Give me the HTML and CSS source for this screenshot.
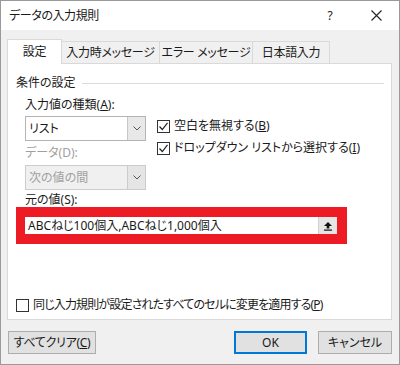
FILE: index.html
```html
<!DOCTYPE html>
<html lang="ja">
<head>
<meta charset="utf-8">
<link rel="stylesheet" href="styles.css">
</head>
<body>
<div class="window">
  <div class="titlebar">
    <span class="title">データの入力規則</span>
    <span class="help">?</span>
    <span class="close"><svg width="11" height="11" viewBox="0 0 11 11"><path d="M0.5 0.5 L10.5 10.5 M10.5 0.5 L0.5 10.5" stroke="#222" stroke-width="1.1" fill="none"/></svg></span>
  </div>
  <div class="content">
    <div class="tabs">
      <div class="tab active">設定</div>
      <div class="tab t2">入力時メッセージ</div>
      <div class="tab t3">エラー メッセージ</div>
      <div class="tab t4">日本語入力</div>
    </div>
    <div class="panel">
      <div class="group-title"><span>条件の設定</span><span class="rule"></span></div>
      <div class="form">
        <div class="label type-label">入力値の種類(<u>A</u>):</div>
        <div class="combo type-combo">
          <span class="combo-text">リスト</span>
          <span class="combo-btn"><svg width="8" height="5" viewBox="0 0 8 5"><path d="M0.5 0.5 L4 4 L7.5 0.5" stroke="#555" fill="none"/></svg></span>
        </div>
        <div class="checks">
          <div class="check-row"><span class="cb"><svg width="11" height="11" viewBox="0 0 11 11"><path d="M1.5 5.5 L4.3 8.5 L9.5 1.8" stroke="#222" stroke-width="1.2" fill="none"/></svg></span><span>空白を無視する(<u>B</u>)</span></div>
          <div class="check-row"><span class="cb"><svg width="11" height="11" viewBox="0 0 11 11"><path d="M1.5 5.5 L4.3 8.5 L9.5 1.8" stroke="#222" stroke-width="1.2" fill="none"/></svg></span><span>ドロップダウン リストから選択する(<u>I</u>)</span></div>
        </div>
        <div class="label disabled-label">データ(D):</div>
        <div class="combo disabled">
          <span class="combo-text">次の値の間</span>
          <span class="combo-btn"><svg width="8" height="5" viewBox="0 0 8 5"><path d="M0.5 0.5 L4 4 L7.5 0.5" stroke="#555" fill="none"/></svg></span>
        </div>
        <div class="label src-label">元の値(S):</div>
      </div>
      <div class="highlight">
        <div class="source">
          <span class="source-text">ABCねじ100個入,ABCねじ1,000個入</span>
          <span class="upload"><svg width="10" height="10" viewBox="0 0 10 10"><path d="M5 1 L9 5 L6.3 5 L6.3 7.5 L3.7 7.5 L3.7 5 L1 5 Z" fill="#111"/><rect x="1" y="8.5" width="8" height="1.2" fill="#111"/></svg></span>
        </div>
      </div>
      <div class="check-row apply"><span class="cb"></span><span class="apply-text">同じ入力規則が設定されたすべてのセルに変更を適用する(<u>P</u>)</span></div>
    </div>
    <div class="footer">
      <button class="btn clear">すべてクリア(<u>C</u>)</button>
      <span class="spacer"></span>
      <button class="btn ok">OK</button>
      <button class="btn cancel">キャンセル</button>
    </div>
  </div>
</div>
</body>
</html>
```
FILE: styles.css
```css
html, body {
  margin: 0;
  padding: 0;
}
body {
  font-family: "Noto Sans", "Noto Sans CJK JP", sans-serif;
  font-size: 12px;
  font-feature-settings: "palt";
  color: #1a1a1a;
  background: #ffffff;
}
.window {
  width: 400px;
  height: 365px;
  box-sizing: border-box;
  border: 1px solid #9a9a9a;
  background: #f0f0f0;
  display: flex;
  flex-direction: column;
}
.titlebar {
  height: 29px;
  background: #ffffff;
  display: flex;
  align-items: center;
  padding-left: 8px;
  flex-shrink: 0;
}
.title {
  flex: 1;
  font-size: 12px;
  line-height: 16px;
  letter-spacing: -0.4px;
}
.help {
  width: 12px;
  text-align: center;
  margin-right: 35px;
  font-size: 12px;
}
.close {
  display: flex;
  margin-right: 17px;
}
.content {
  padding: 9px 7px 0 6px;
  display: flex;
  flex-direction: column;
}
.tabs {
  display: flex;
  align-items: flex-end;
  height: 24px;
  flex-shrink: 0;
}
.tab {
  height: 22px;
  box-sizing: border-box;
  border: 1px solid #d9d9d9;
  border-bottom: none;
  border-left: none;
  background: #f0f0f0;
  display: flex;
  align-items: center;
  justify-content: center;
  font-size: 12px;
  line-height: 16px;
  letter-spacing: -0.3px;
}
.tab.active {
  height: 25px;
  width: 55px;
  background: #ffffff;
  border-left: 1px solid #d9d9d9;
  position: relative;
  z-index: 1;
  margin-bottom: -1px;
}
.t2 { width: 98px; }
.t3 { width: 93px; }
.t4 { width: 77px; }
.panel {
  height: 257px;
  min-height: 0;
  flex-shrink: 0;
  box-sizing: border-box;
  background: #ffffff;
  border: 1px solid #d9d9d9;
  padding: 11px 0 0 8px;
  display: flex;
  flex-direction: column;
  overflow: hidden;
}
.group-title {
  display: flex;
  align-items: center;
  height: 16px;
  line-height: 16px;
}
.rule {
  flex: 1;
  height: 1px;
  background: #dcdcdc;
  margin-left: 6px;
  margin-right: 7px;
}
.form {
  padding-left: 9px;
  display: grid;
  grid-template-columns: 121px 1fr;
  column-gap: 11px;
  align-items: start;
}
.label {
  height: 16px;
  line-height: 16px;
}
.type-label {
  grid-column: 1 / 3;
  margin-top: 6px;
}
.type-combo {
  margin-top: 3px;
}
.checks {
  grid-column: 2;
  grid-row: 2 / 5;
  display: flex;
  flex-direction: column;
  margin-top: 5px;
  gap: 6px;
}
.disabled-label {
  grid-column: 1;
  color: #a0a0a0;
  margin-top: 4px;
}
.src-label {
  grid-column: 1 / 3;
  margin-top: 3px;
  height: 14px;
  line-height: 14px;
}
.combo {
  grid-column: 1;
  height: 25px;
  box-sizing: border-box;
  border: 1px solid #b4b4b4;
  background: #ffffff;
  display: flex;
  align-items: stretch;
}
.combo-text {
  flex: 1;
  padding-left: 3px;
  line-height: 23px;
}
.combo-btn {
  width: 17px;
  background: #e8e8e8;
  border-left: 1px solid #c8c8c8;
  display: flex;
  align-items: center;
  justify-content: center;
}
.combo.disabled {
  margin-top: 4px;
  background: #f0f0f0;
  border-color: #cccccc;
  color: #a0a0a0;
}
.combo.disabled .combo-btn {
  background: #e5e5e5;
  border-left-color: #cccccc;
}
.check-row {
  display: flex;
  align-items: center;
  height: 16px;
  line-height: 16px;
}
.cb {
  width: 13px;
  height: 13px;
  box-sizing: border-box;
  border: 1px solid #333333;
  background: #ffffff;
  margin-right: 4px;
  display: flex;
  align-items: center;
  justify-content: center;
  flex-shrink: 0;
}
.highlight {
  width: 331px;
  box-sizing: border-box;
  border: 10px solid #ed1c24;
  border-left-width: 9px;
}
.source {
  height: 17px;
  background: #ffffff;
  display: flex;
  align-items: center;
}
.source-text {
  flex: 1;
  padding-left: 3px;
  line-height: 17px;
}
.upload {
  width: 19px;
  height: 17px;
  box-sizing: border-box;
  background: #e6e6e6;
  border-left: 1px solid #d0d0d0;
  display: flex;
  align-items: center;
  justify-content: center;
}
.apply {
  margin-top: 53px;
}
.apply-text {
  letter-spacing: -0.85px;
}
.footer {
  display: flex;
  margin-top: 11px;
  align-items: center;
}
.btn {
  height: 23px;
  box-sizing: border-box;
  background: #e1e1e1;
  border: 1px solid #adadad;
  font-family: "Noto Sans", "Noto Sans CJK JP", sans-serif;
  font-size: 12px;
  font-feature-settings: "palt";
  color: #1a1a1a;
  padding: 0;
  line-height: 16px;
  margin: 0;
}
.clear {
  width: 88px;
  margin-left: 1px;
  letter-spacing: -0.3px;
}
.spacer {
  flex: 1;
}
.ok {
  width: 73px;
  border: 2px solid #0078d7;
}
.cancel {
  width: 74px;
  margin-left: 11px;
}
```
